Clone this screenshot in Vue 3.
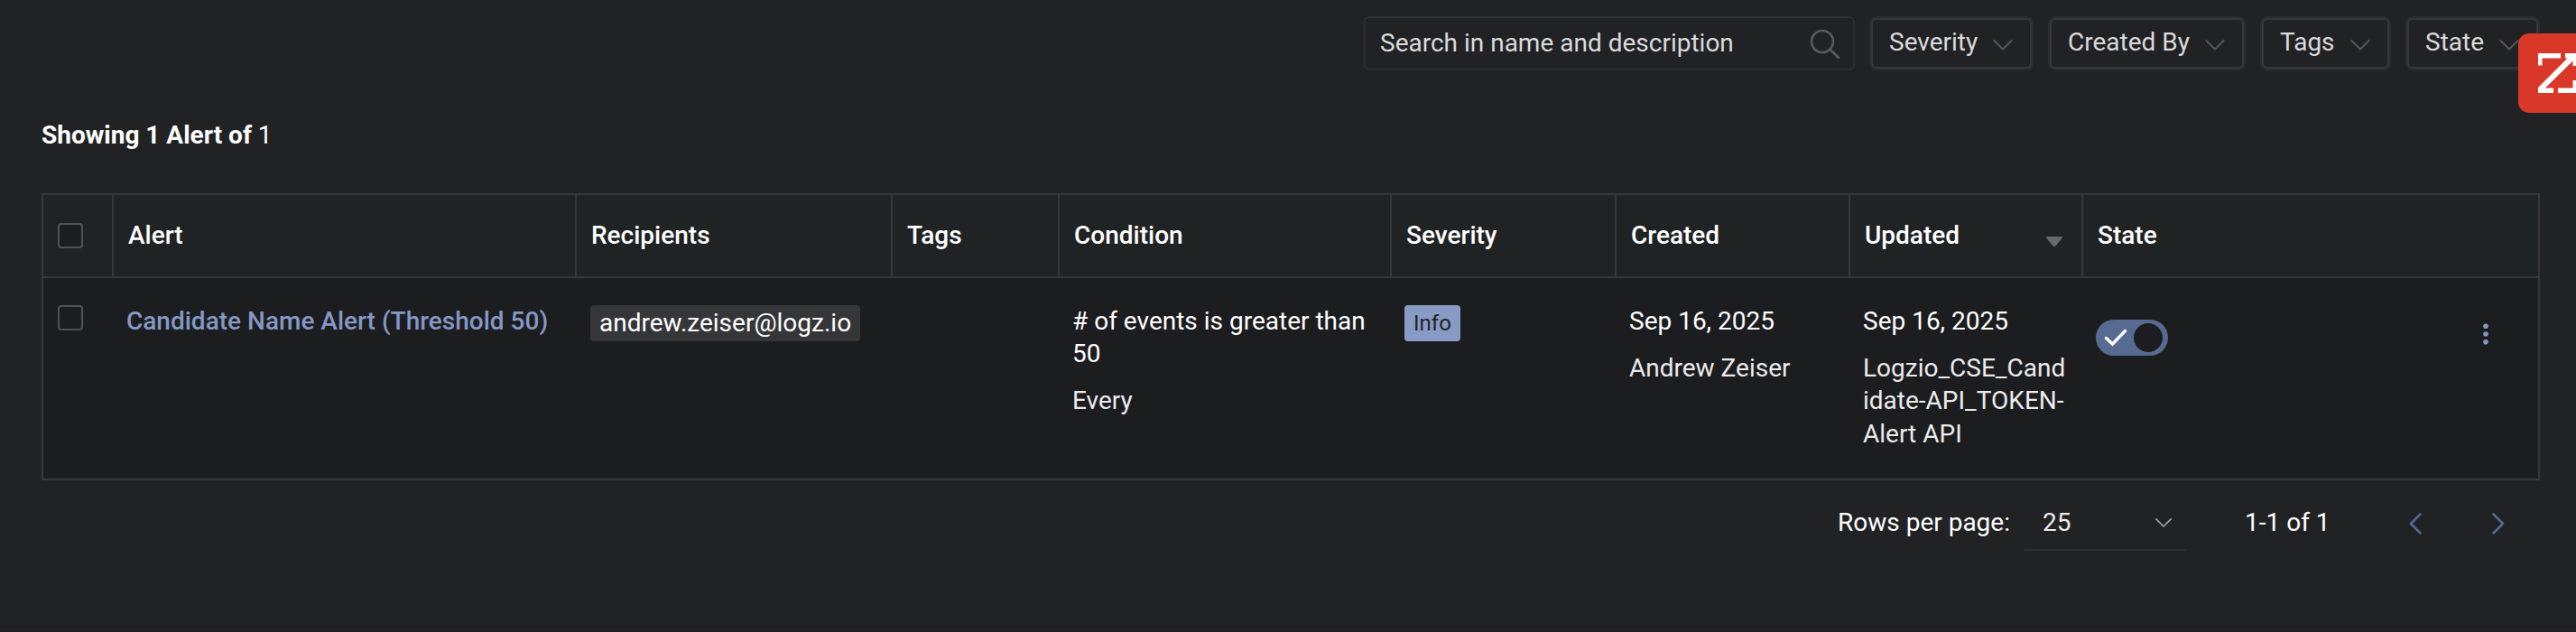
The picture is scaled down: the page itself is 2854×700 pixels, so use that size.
<script setup>
const filters = [
  { label: 'Severity', cls: 'w-severity' },
  { label: 'Created By', cls: 'w-created' },
  { label: 'Tags', cls: 'w-tags' },
  { label: 'State', cls: 'w-state' },
]
const columns = ['Alert', 'Recipients', 'Tags', 'Condition', 'Severity', 'Created', 'Updated', 'State']
</script>

<template>
  <div class="page">
    <header class="toolbar">
      <div class="search">
        <span>Search in name and description</span>
        <svg class="search-icon" viewBox="0 0 34 34" width="34" height="34" fill="none">
          <circle cx="14" cy="14" r="12" stroke="#545b5c" stroke-width="2.6" />
          <path d="M22.8 22.8 32 32" stroke="#545b5c" stroke-width="2.8" stroke-linecap="round" />
        </svg>
      </div>
      <button v-for="f in filters" :key="f.label" class="filter" :class="f.cls">
        <span class="filter-inner">
          <span>{{ f.label }}</span>
          <svg class="chev" viewBox="0 0 22 12" width="22" height="12" fill="none">
            <path d="M1.5 1 11 10.5 20.5 1" stroke="#545859" stroke-width="2" stroke-linecap="round" stroke-linejoin="round" />
          </svg>
        </span>
      </button>
    </header>

    <div class="count"><b>Showing 1 Alert of</b> 1</div>

    <section class="table">
      <div class="row head">
        <div class="cell"><span class="box"></span></div>
        <div v-for="c in columns" :key="c" class="cell">
          <span>{{ c }}</span>
          <svg v-if="c === 'Updated'" class="sort" viewBox="0 0 18 11" width="18" height="11">
            <path d="M1.5 0h15c1.3 0 1.8 1 1 2l-6.6 8c-1 1.2-2.8 1.2-3.8 0L.5 2C-.3 1 .2 0 1.5 0z" fill="#686868" />
          </svg>
        </div>
      </div>
      <div class="row body">
        <div class="cell"><span class="box"></span></div>
        <div class="cell"><a class="link">Candidate Name Alert (Threshold 50)</a></div>
        <div class="cell recipients"><span class="chip">andrew.zeiser@logz.io</span></div>
        <div class="cell"></div>
        <div class="cell"><p># of events is greater than 50</p><p class="sub">Every</p></div>
        <div class="cell"><span class="chip info">Info</span></div>
        <div class="cell"><p>Sep 16, 2025</p><p class="sub">Andrew Zeiser</p></div>
        <div class="cell"><p>Sep 16, 2025</p><p class="sub">Logzio_CSE_Cand<br>idate-API_TOKEN-<br>Alert API</p></div>
        <div class="cell state">
          <span class="toggle">
            <svg viewBox="0 0 26 20" width="26" height="20" fill="none">
              <path d="M2.5 10.5 9.5 17 23.5 2.5" stroke="#fff" stroke-width="3.4" stroke-linecap="round" />
            </svg>
            <i class="knob"></i>
          </span>
          <svg class="dots" viewBox="0 0 6 24" width="6" height="24" fill="#8598c5">
            <circle cx="3" cy="3.3" r="2.8" /><circle cx="3" cy="12" r="2.8" /><circle cx="3" cy="20.7" r="2.8" />
          </svg>
        </div>
      </div>
    </section>

    <footer class="pager">
      <span class="rows">Rows per page:</span>
      <div class="select">
        <span>25</span>
        <svg viewBox="0 0 18 10" width="18" height="10" fill="none">
          <path d="M.8.8 9 9 17.2.8" stroke="#a0a1a2" stroke-width="1.7" stroke-linecap="round" stroke-linejoin="round" />
        </svg>
      </div>
      <span class="range">1-1 of 1</span>
      <svg class="prev" viewBox="0 0 14 24" width="14" height="24" fill="none">
        <path d="M12.5 1.5 2 12l10.5 10.5" stroke="#54698f" stroke-width="2.6" stroke-linecap="round" stroke-linejoin="round" />
      </svg>
      <svg viewBox="0 0 14 24" width="14" height="24" fill="none">
        <path d="M1.5 1.5 12 12 1.5 22.5" stroke="#54698f" stroke-width="2.6" stroke-linecap="round" stroke-linejoin="round" />
      </svg>
    </footer>

    <aside class="widget">
      <svg viewBox="0 0 42 44" width="42" height="44" fill="#fff">
        <path d="M0 0H25V5.5H4.500V13.500H0z" />
        <path d="M30 0H42V14H38.500V8.500L8 38.500H17V44H0V38L32.500 5.500H30z" />
        <path d="M22 38.500H38.500V30H42V44H22z" />
      </svg>
    </aside>
  </div>
</template>

<style>
body {
  background: #212224;
}
</style>

<style scoped>
* {
  box-sizing: border-box;
}
.page {
  position: relative;
  width: 2854px;
  height: 700px;
  overflow: hidden;
  border-bottom: 1px solid #201c1f;
  background: #212224;
  color: #fff;
  font-family: Roboto, sans-serif;
  font-size: 28px;
  line-height: 36.4px;
}
p {
  margin: 0;
}
.toolbar {
  display: flex;
  justify-content: flex-end;
  gap: 16px;
  height: 78px;
  padding: 18px 40px 0 0;
  color: #d9dadb;
}
.search {
  display: flex;
  align-items: center;
  justify-content: space-between;
  width: 544px;
  height: 60px;
  padding: 1px 14px 0 16px;
  border: 2px solid #2d2e30;
  border-radius: 6px;
}
.filter {
  height: 60px;
  padding: 0;
  border: 2px solid #2b2c2e;
  border-radius: 8px;
  background: none;
  color: inherit;
  font: inherit;
}
.filter-inner {
  display: flex;
  align-items: center;
  justify-content: space-between;
  height: 56px;
  padding: 0 19px 1px 18px;
  border: 2px solid #36373a;
  border-radius: 6px;
}
.chev {
  margin-top: 4px;
}
.w-severity { width: 182px; }
.w-created { width: 219px; }
.w-tags { width: 145px; }
.w-state { width: 149px; }
.count {
  margin: 54px 0 0 46px;
}
.count b {
  font-weight: 700;
}
.table {
  width: 2768px;
  height: 318px;
  margin: 45.6px 0 0 46px;
  border: 2px solid #363739;
  background: #1c1d1f;
}
.row {
  display: grid;
  grid-template-columns: 78px 513px 350px 185px 368px 249px 259px 258px 1fr;
}
.head {
  height: 92px;
  border-bottom: 2px solid #363739;
  background: #202324;
  font-weight: 500;
}
.head .cell {
  display: flex;
  align-items: center;
  justify-content: space-between;
  padding: 0 21px 0 16px;
  border-right: 2px solid #343638;
}
.head .cell:last-child {
  border-right: 0;
}
.sort {
  margin-top: 13px;
}
.body .cell {
  padding: 29.6px 14px 0 14px;
}
.body .cell:first-child {
  padding: 30px 0 0 16px;
}
.body .recipients {
  padding-left: 15px;
}
.box {
  display: block;
  width: 28px;
  height: 28px;
  border: 2px solid #4d5354;
  border-radius: 4px;
  background: #1c1d1f;
}
.link {
  color: #8598c5;
  font-weight: 500;
}
.chip {
  display: inline-flex;
  align-items: center;
  height: 40px;
  margin-top: 0.4px;
  padding: 0 10px;
  border-radius: 4px;
  background: #353638;
}
.info {
  background: #889bc5;
  color: #212224;
  font-size: 24px;
}
.sub {
  margin-top: 16px;
  color: #ebebeb;
}
.body .state {
  display: flex;
  justify-content: space-between;
  padding: 46px 55px 0 14px;
}
.toggle {
  display: flex;
  align-items: center;
  justify-content: space-between;
  width: 80px;
  height: 40px;
  padding: 0 6px 0 9px;
  border-radius: 20px;
  background: #566a92;
}
.knob {
  width: 32px;
  height: 32px;
  border-radius: 50%;
  background: #1c1d1f;
}
.dots {
  margin-top: 4px;
}
.pager {
  display: flex;
  align-items: center;
  height: 96px;
  padding-left: 2036px;
}
.rows {
  width: 207px;
  padding-bottom: 1px;
}
.select {
  display: flex;
  align-items: center;
  justify-content: space-between;
  width: 180px;
  height: 60px;
  padding: 0 17px 0 20px;
  border-bottom: 2px solid #2d2e30;
  color: #ebebeb;
}
.range {
  width: 182px;
  margin-left: 64px;
  padding-bottom: 1px;
}
.prev {
  margin-right: 78px;
}
.widget {
  position: absolute;
  top: 37px;
  right: -20px;
  width: 84px;
  height: 88px;
  padding: 22px 0 0 22px;
  border-radius: 12px;
  background: #d93829;
}
.widget svg {
  display: block;
}
</style>
